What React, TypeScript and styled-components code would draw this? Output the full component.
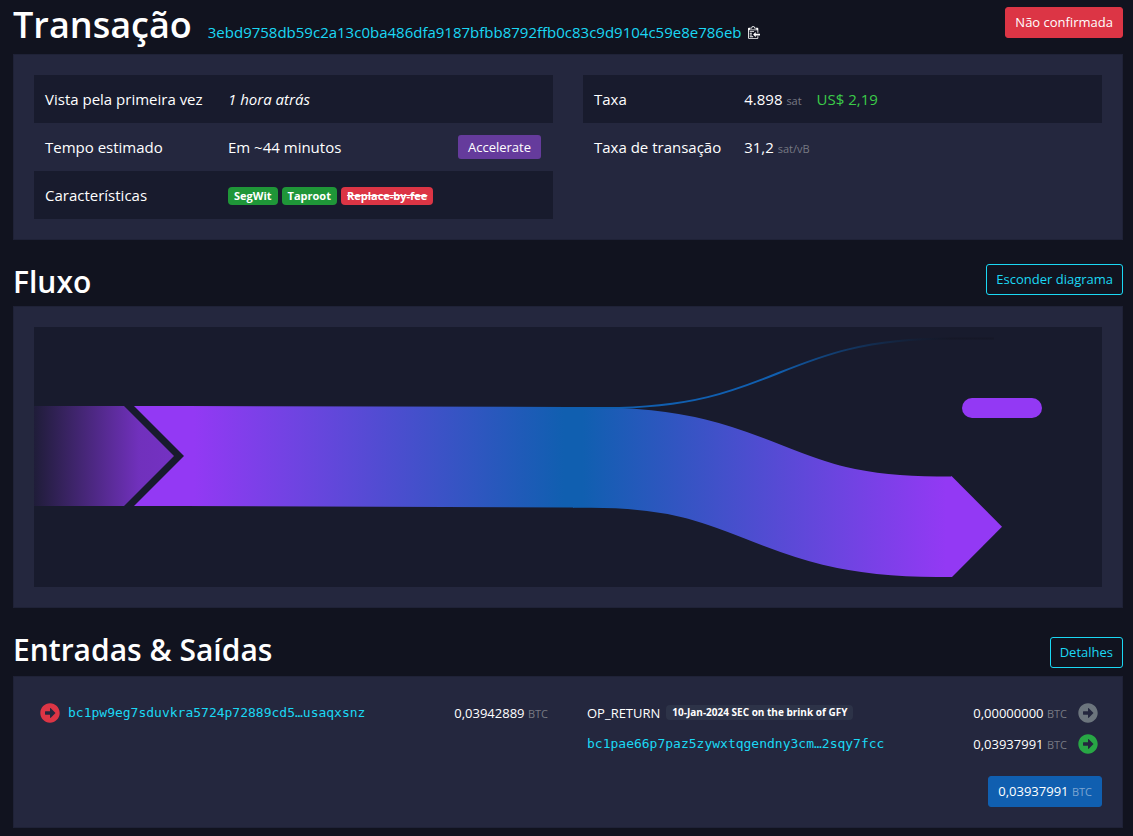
import React from 'react';
import styled, { createGlobalStyle, css } from 'styled-components';
import { FaArrowAltCircleRight } from 'react-icons/fa';

const color = {
  page: '#11131f',
  box: '#24273e',
  boxEdge: '#1f2237',
  stripe: '#181b2d',
  link: '#1bd8f4',
  muted: '#777983',
  fiat: '#3bcc49',
  success: '#1f9638',
  confirmed: '#28a745',
  danger: '#dc3545',
  accelerate: '#653b9c',
  primary: '#105fb0',
  purple: '#9339f4',
  grey: '#6c757d',
  tag: '#2d3348',
};

const GlobalStyle = createGlobalStyle`
  *, *::before, *::after { box-sizing: border-box; }
  body {
    margin: 0;
    background: ${color.page};
    color: #fff;
    font-family: 'Open Sans', 'Noto Sans', sans-serif;
    font-size: 15px;
    line-height: 24px;
  }
`;

const Page = styled.main`
  padding: 0 10px 8px 13px;
`;

const SectionHeader = styled.header<{ $first?: boolean }>`
  display: flex;
  justify-content: space-between;
  align-items: flex-start;
  height: ${p => (p.$first ? 54 : 66)}px;
  padding-top: ${p => (p.$first ? 7 : 24)}px;
`;

const BottomHeader = styled(SectionHeader)`
  align-items: flex-end;
  height: 68px;
  padding: 0 0 8px;
`;

const TitleGroup = styled.div`
  display: flex;
  align-items: baseline;
  gap: 16px;
`;

const PageTitle = styled.h1`
  margin: 0;
  font-size: 36px;
  font-weight: 600;
  line-height: 36px;
`;

const SectionTitle = styled.h2`
  margin: 0;
  font-size: 30px;
  font-weight: 600;
  line-height: 36px;
`;

const TxId = styled.div`
  display: flex;
  align-items: center;
  gap: 7px;
`;

const Link = styled.a<{ $mono?: boolean }>`
  color: ${color.link};
  text-decoration: none;
  ${p =>
    p.$mono &&
    css`
      font-family: 'DejaVu Sans Mono', monospace;
      font-size: 13px;
    `}
`;

const CopyButton = styled.button`
  display: flex;
  padding: 0;
  border: 0;
  background: none;
  color: #fff;
  cursor: pointer;
`;

type Tone = 'danger' | 'outline' | 'primary';
const tones: Record<Tone, ReturnType<typeof css>> = {
  danger: css`
    background: ${color.danger};
    border-color: ${color.danger};
    color: #fff;
  `,
  outline: css`
    background: transparent;
    border-color: ${color.link};
    color: ${color.link};
  `,
  primary: css`
    background: ${color.primary};
    border-color: ${color.primary};
    color: #fff;
  `,
};

const Button = styled.button<{ $tone: Tone }>`
  padding: 4px 9px;
  border: 1px solid;
  border-radius: 3px;
  font: inherit;
  font-size: 13px;
  line-height: 21px;
  white-space: nowrap;
  cursor: pointer;
  ${p => tones[p.$tone]}
`;

const AccelerateButton = styled.button`
  padding: 0 10px;
  border: 0;
  border-radius: 3px;
  background: ${color.accelerate};
  color: #fff;
  font: inherit;
  font-size: 13px;
  line-height: 24px;
  cursor: pointer;
`;

const Box = styled.section`
  padding: 20px;
  border: 1px solid ${color.boxEdge};
  background: ${color.box};
`;

const Columns = styled.div`
  display: grid;
  grid-template-columns: 1fr 1fr;
  gap: 30px;
  align-items: start;
`;

const InfoTable = styled.table<{ $label: number }>`
  width: 100%;
  border-collapse: collapse;

  tr:nth-child(odd) {
    background: ${color.stripe};
  }
  th,
  td {
    height: 48px;
    padding: 0 12px 0 11px;
    font-weight: 400;
    text-align: left;
    white-space: nowrap;
  }
  th {
    width: ${p => p.$label}px;
  }
`;

const Spread = styled.div`
  display: flex;
  justify-content: space-between;
  align-items: center;
`;

const Badges = styled.div`
  display: flex;
  gap: 4px;
  padding-top: 2px;
`;

const Badge = styled.span<{ $bg: string; $struck?: boolean }>`
  padding: 0 6px;
  border-radius: 4px;
  background: ${p => p.$bg};
  font-size: 11px;
  font-weight: 700;
  line-height: 18px;
  text-decoration: ${p => (p.$struck ? 'line-through' : 'none')};
`;

const Tag = styled.span`
  padding: 0 6px;
  border-radius: 4px;
  background: ${color.tag};
  font-size: 10px;
  font-weight: 700;
  line-height: 15px;
`;

const Unit = styled.span<{ $light?: boolean }>`
  color: ${p => (p.$light ? '#7ba5d2' : color.muted)};
  font-size: 11px;
  line-height: 1;
`;

const Fiat = styled.span`
  margin-left: 11px;
  color: ${color.fiat};
`;

const Flow = styled.div`
  background: ${color.stripe};

  svg {
    display: block;
    width: 100%;
    height: 260px;
  }
`;

const IoTable = styled.table`
  width: 100%;
  border-collapse: collapse;
  font-size: 13px;

  td {
    height: 31px;
    padding: 0;
    white-space: nowrap;
  }
`;

const IconCell = styled.td<{ $end?: boolean }>`
  && {
    width: ${p => (p.$end ? 35 : 34)}px;
    padding-left: ${p => (p.$end ? 11 : 6)}px;
  }
  svg {
    display: block;
  }
`;

const AddressCell = styled.td<{ $inset?: boolean }>`
  && {
    padding-left: ${p => (p.$inset ? 4 : 0)}px;
  }
`;

const AmountCell = styled.td<{ $inset?: boolean }>`
  && {
    padding-right: ${p => (p.$inset ? 5 : 0)}px;
    text-align: right;
  }
`;

const OpReturn = styled.span`
  display: flex;
  align-items: center;
  gap: 6px;
`;

const Total = styled.div`
  display: flex;
  justify-content: flex-end;
  margin-top: 17px;
`;

function ClipboardIcon() {
  return (
    <svg width="12" height="14" viewBox="0 0 14 16" fill="currentColor" aria-hidden="true">
      <path d="M2 13h4v1H2v-1zm5-6H2v1h5V7zm2 3V8l-3 3 3 3v-2h5v-2H9zM4.5 9H2v1h2.5V9zM2 12h2.5v-1H2v1zm9 1h1v2c-.02.28-.11.52-.3.7-.19.18-.42.28-.7.3H1c-.55 0-1-.45-1-1V4c0-.55.45-1 1-1h3c0-1.11.89-2 2-2 1.11 0 2 .89 2 2h3c.55 0 1 .45 1 1v5h-1V6H1v9h10v-2zM2 5h8c0-.55-.45-1-1-1H8c-.55 0-1-.45-1-1s-.45-1-1-1-1 .45-1 1-.45 1-1 1H3c-.55 0-1 .45-1 1z" />
    </svg>
  );
}

function FlowDiagram() {
  return (
    <svg viewBox="0 0 1068 260" role="img" aria-label="Fluxo">
      <defs>
        <linearGradient id="prev" gradientUnits="userSpaceOnUse" x1="0" x2="140" y1="0" y2="0">
          <stop offset="0" stopColor={color.purple} stopOpacity="0.06" />
          <stop offset="0.75" stopColor={color.purple} stopOpacity="0.72" />
          <stop offset="1" stopColor={color.purple} stopOpacity="0.75" />
        </linearGradient>
        <linearGradient id="input" gradientUnits="userSpaceOnUse" x1="160" x2="530" y1="0" y2="0">
          <stop offset="0" stopColor={color.purple} />
          <stop offset="1" stopColor={color.primary} />
        </linearGradient>
        <linearGradient id="output" gradientUnits="userSpaceOnUse" x1="549" x2="912" y1="0" y2="0">
          <stop offset="0" stopColor={color.primary} />
          <stop offset="1" stopColor={color.purple} />
        </linearGradient>
        <linearGradient id="fade" gradientUnits="userSpaceOnUse" x1="744" x2="917" y1="0" y2="0">
          <stop offset="0" stopColor={color.primary} />
          <stop offset="1" stopColor="#11131f" stopOpacity="0.4" />
        </linearGradient>
      </defs>
      <path d="M0 79H90L140 129L90 179H0Z" fill="url(#prev)" />
      <path d="M100 79H150L534 80H540V180.500H534L150 179H100L150 129Z" fill="url(#input)" />
      <path
        d="M539 130.500H557C730 130.500 730 199.700 903 199.700H918"
        fill="none"
        stroke="url(#output)"
        strokeWidth="100.500"
      />
      <path d="M917 149.500H918L968 199.700L918 250H917Z" fill={color.purple} />
      <path
        d="M540 81H571C744 81 744 11.500 917 11.500H960"
        fill="none"
        stroke="url(#fade)"
        strokeWidth="2"
      />
      <rect x="928" y="71" width="80" height="20" rx="10" fill={color.purple} />
    </svg>
  );
}

export default function App() {
  return (
    <>
      <GlobalStyle />
      <Page>
        <SectionHeader $first>
          <TitleGroup>
            <PageTitle>Transação</PageTitle>
            <TxId>
              <Link href="#tx">3ebd9758db59c2a13c0ba486dfa9187bfbb8792ffb0c83c9d9104c59e8e786eb</Link>
              <CopyButton type="button" aria-label="Copiar">
                <ClipboardIcon />
              </CopyButton>
            </TxId>
          </TitleGroup>
          <Button type="button" $tone="danger">Não confirmada</Button>
        </SectionHeader>

        <Box>
          <Columns>
            <InfoTable $label={183}>
              <tbody>
                <tr>
                  <th scope="row">Vista pela primeira vez</th>
                  <td><i>1 hora atrás</i></td>
                </tr>
                <tr>
                  <th scope="row">Tempo estimado</th>
                  <td>
                    <Spread>
                      Em ~44 minutos
                      <AccelerateButton type="button">Accelerate</AccelerateButton>
                    </Spread>
                  </td>
                </tr>
                <tr>
                  <th scope="row">Características</th>
                  <td>
                    <Badges>
                      <Badge $bg={color.success}>SegWit</Badge>
                      <Badge $bg={color.success}>Taproot</Badge>
                      <Badge $bg={color.danger} $struck>Replace-by-fee</Badge>
                    </Badges>
                  </td>
                </tr>
              </tbody>
            </InfoTable>
            <InfoTable $label={150}>
              <tbody>
                <tr>
                  <th scope="row">Taxa</th>
                  <td>4.898 <Unit>sat</Unit> <Fiat>US$ 2,19</Fiat></td>
                </tr>
                <tr>
                  <th scope="row">Taxa de transação</th>
                  <td>31,2 <Unit>sat/vB</Unit></td>
                </tr>
              </tbody>
            </InfoTable>
          </Columns>
        </Box>

        <SectionHeader>
          <SectionTitle>Fluxo</SectionTitle>
          <Button type="button" $tone="outline">Esconder diagrama</Button>
        </SectionHeader>

        <Box>
          <Flow>
            <FlowDiagram />
          </Flow>
        </Box>

        <BottomHeader>
          <SectionTitle>Entradas &amp; Saídas</SectionTitle>
          <Button type="button" $tone="outline">Detalhes</Button>
        </BottomHeader>

        <Box>
          <Columns>
            <IoTable>
              <tbody>
                <tr>
                  <IconCell><FaArrowAltCircleRight size={20} color={color.danger} /></IconCell>
                  <AddressCell><Link $mono href="#in">bc1pw9eg7sduvkra5724p72889cd5…usaqxsnz</Link></AddressCell>
                  <AmountCell $inset>0,03942889 <Unit>BTC</Unit></AmountCell>
                </tr>
              </tbody>
            </IoTable>
            <IoTable>
              <tbody>
                <tr>
                  <AddressCell $inset>
                    <OpReturn>OP_RETURN <Tag>10-Jan-2024 SEC on the brink of GFY</Tag></OpReturn>
                  </AddressCell>
                  <AmountCell>0,00000000 <Unit>BTC</Unit></AmountCell>
                  <IconCell $end><FaArrowAltCircleRight size={20} color={color.grey} /></IconCell>
                </tr>
                <tr>
                  <AddressCell $inset><Link $mono href="#out">bc1pae66p7paz5zywxtqgendny3cm…2sqy7fcc</Link></AddressCell>
                  <AmountCell>0,03937991 <Unit>BTC</Unit></AmountCell>
                  <IconCell $end><FaArrowAltCircleRight size={20} color={color.confirmed} /></IconCell>
                </tr>
              </tbody>
            </IoTable>
          </Columns>
          <Total>
            <Button type="button" $tone="primary">0,03937991 <Unit $light>BTC</Unit></Button>
          </Total>
        </Box>
      </Page>
    </>
  );
}
